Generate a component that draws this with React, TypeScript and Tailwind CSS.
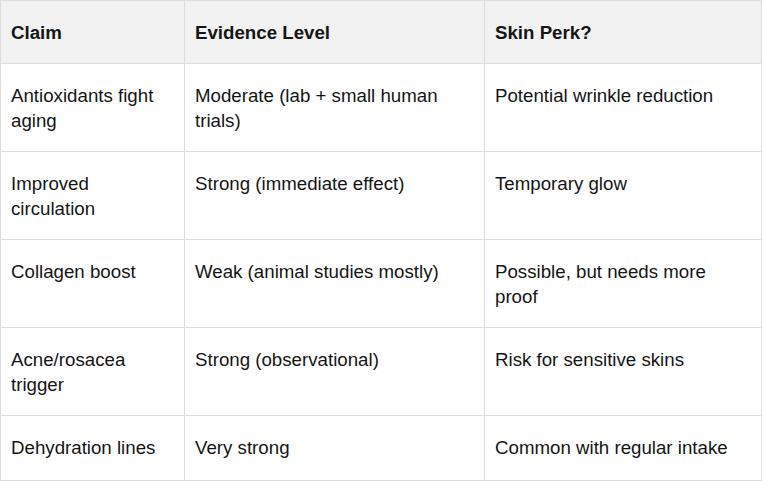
const ROWS = [
  ['Antioxidants fight aging', 'Moderate (lab + small human trials)', 'Potential wrinkle reduction'],
  ['Improved circulation', 'Strong (immediate effect)', 'Temporary glow'],
  ['Collagen boost', 'Weak (animal studies mostly)', 'Possible, but needs more proof'],
  ['Acne/rosacea trigger', 'Strong (observational)', 'Risk for sensitive skins'],
  ['Dehydration lines', 'Very strong', 'Common with regular intake'],
];

const cell = 'border border-[#dddddd] px-[10px] pt-[18.5px] align-top text-left';

export default function App() {
  return (
    <div className="bg-white w-[762px] h-[483px] font-['Liberation_Sans',Arial,sans-serif] text-[18.7px] leading-[25px] text-[#151515]">
      <table className="w-[762px] table-fixed border-collapse">
        <colgroup>
          <col className="w-[184px]" />
          <col className="w-[300px]" />
          <col />
        </colgroup>
        <thead>
          <tr className="bg-[#f2f2f2]">
            <th className={`${cell} pb-[18.5px] font-bold`}>Claim</th>
            <th className={`${cell} pb-[18.5px] font-bold`}>Evidence Level</th>
            <th className={`${cell} pb-[18.5px] font-bold`}>Skin Perk?</th>
          </tr>
        </thead>
        <tbody>
          {ROWS.map((r, i) => (
            <tr key={r[0]}>
              {r.map(c => (
                <td key={c} className={`${cell} ${i === ROWS.length - 1 ? 'pb-[20px]' : 'pb-[18.5px]'}`}>{c}</td>
              ))}
            </tr>
          ))}
        </tbody>
      </table>
    </div>
  );
}
